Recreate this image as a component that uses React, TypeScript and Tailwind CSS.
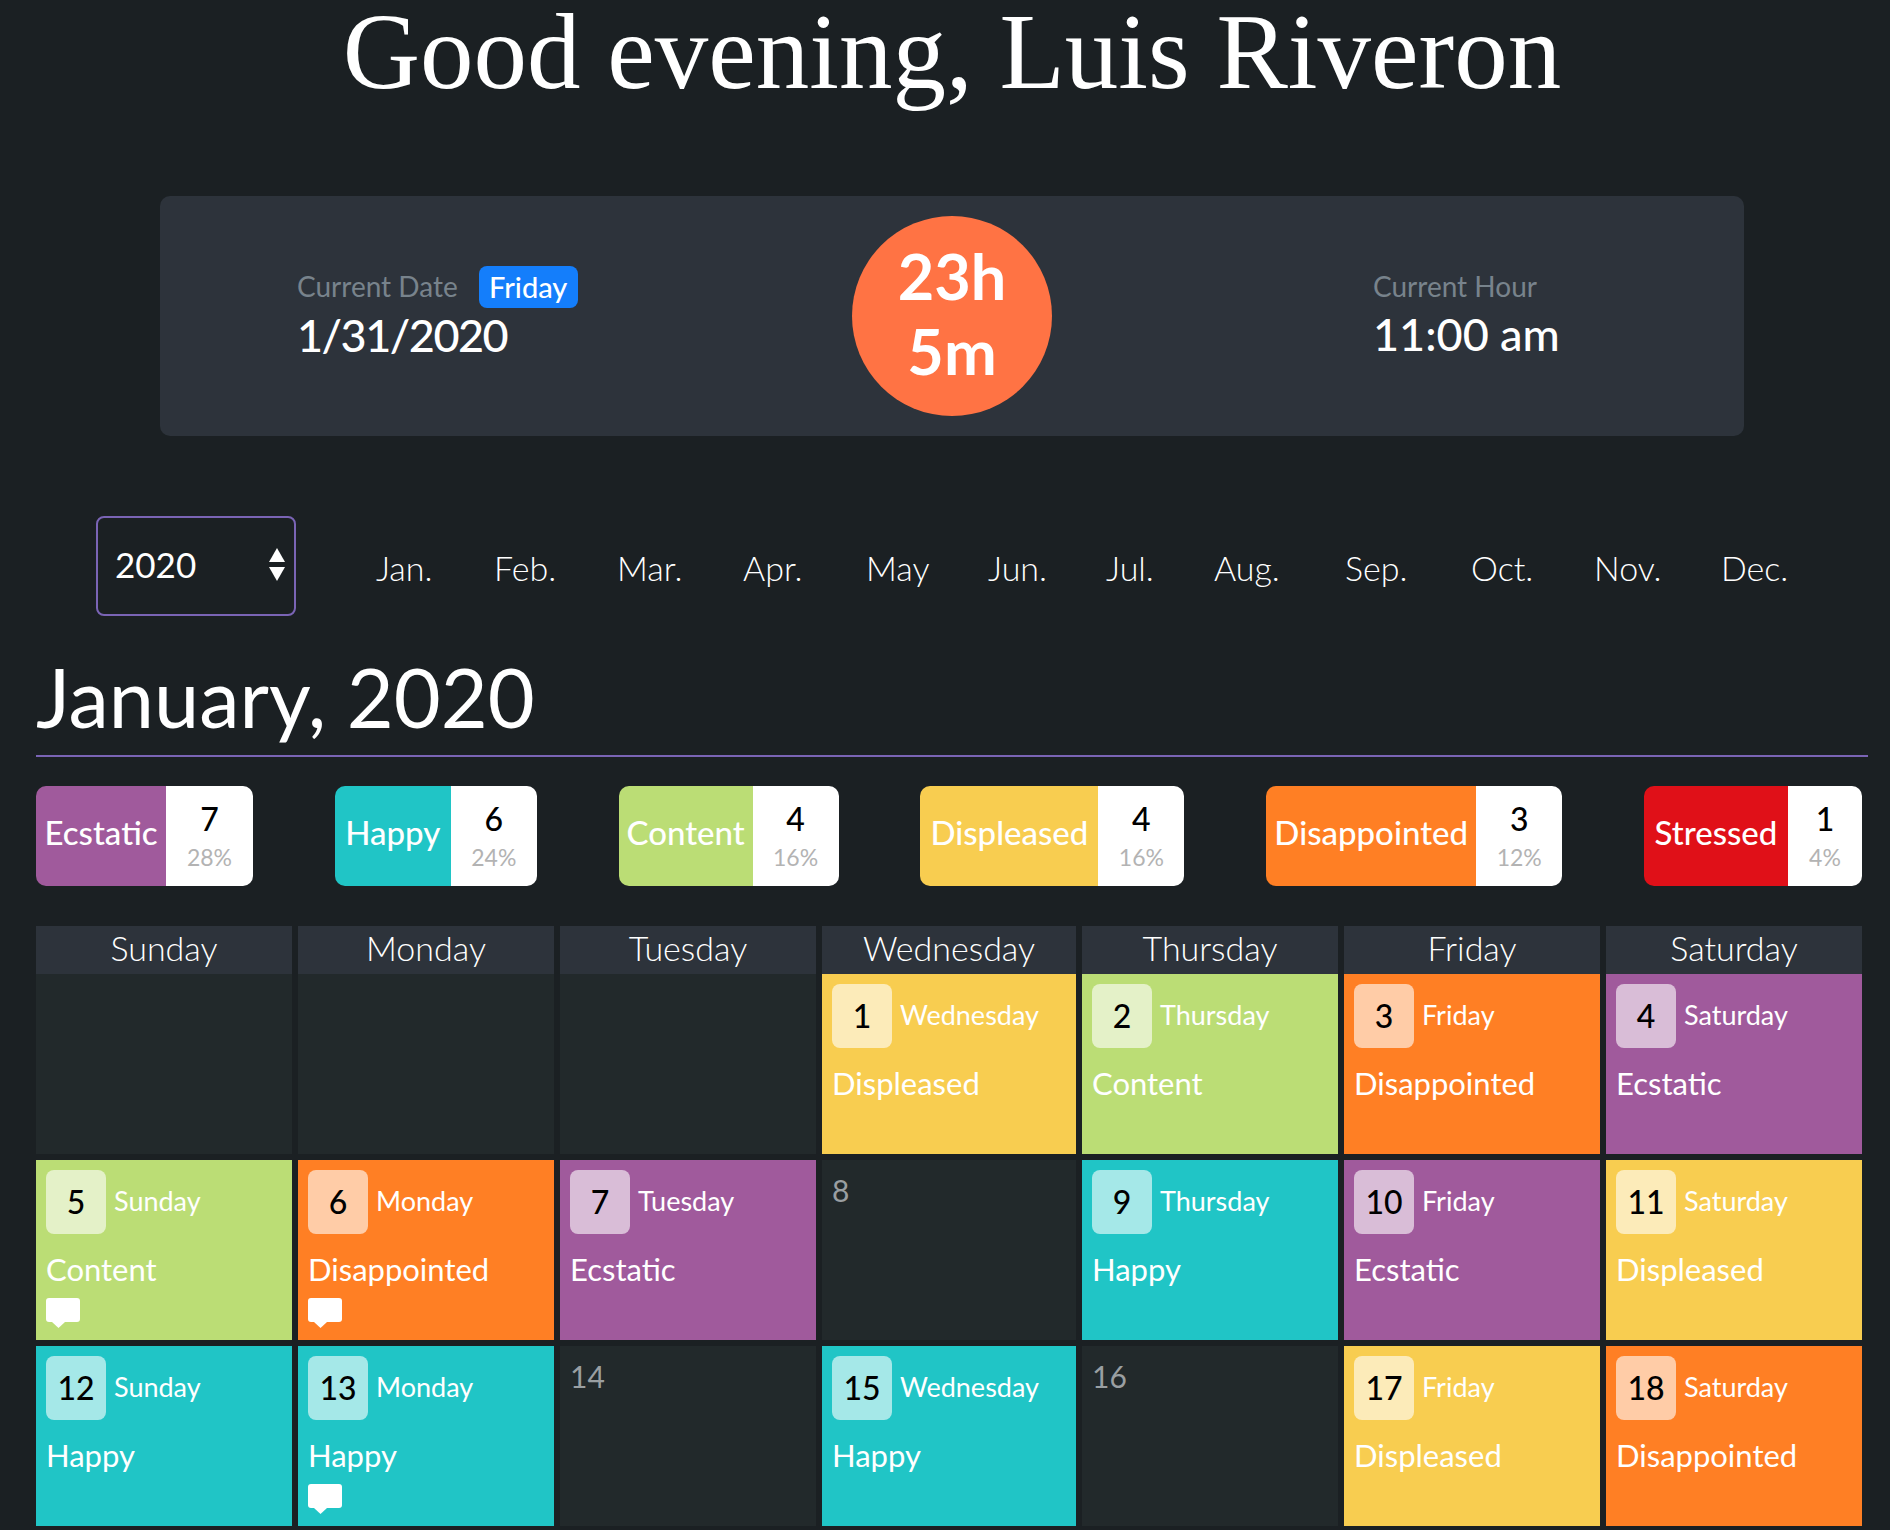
const moods = {
  Ecstatic: 'bg-[#a05a9c]',
  Happy: 'bg-[#20c5c6]',
  Content: 'bg-[#bbdd75]',
  Displeased: 'bg-[#f8cd50]',
  Disappointed: 'bg-[#ff7f24]',
  Stressed: 'bg-[#e01018]',
};

type Mood = keyof typeof moods;

const stats: { mood: Mood; count: number; pct: string; w: string; v: string }[] = [
  { mood: 'Ecstatic', count: 7, pct: '28%', w: 'w-[130px]', v: 'w-[87px]' },
  { mood: 'Happy', count: 6, pct: '24%', w: 'w-[116px]', v: 'w-[86px]' },
  { mood: 'Content', count: 4, pct: '16%', w: 'w-[134px]', v: 'w-[86px]' },
  { mood: 'Displeased', count: 4, pct: '16%', w: 'w-[178px]', v: 'w-[86px]' },
  { mood: 'Disappointed', count: 3, pct: '12%', w: 'w-[210px]', v: 'w-[86px]' },
  { mood: 'Stressed', count: 1, pct: '4%', w: 'w-[144px]', v: 'w-[74px]' },
];

const months = ['Jan.', 'Feb.', 'Mar.', 'Apr.', 'May', 'Jun.', 'Jul.', 'Aug.', 'Sep.', 'Oct.', 'Nov.', 'Dec.'];
const weekdays = ['Sunday', 'Monday', 'Tuesday', 'Wednesday', 'Thursday', 'Friday', 'Saturday'];

type Day = { n?: number; mood?: Mood; note?: boolean };

const days: Day[] = [
  {},
  {},
  {},
  { n: 1, mood: 'Displeased' },
  { n: 2, mood: 'Content' },
  { n: 3, mood: 'Disappointed' },
  { n: 4, mood: 'Ecstatic' },
  { n: 5, mood: 'Content', note: true },
  { n: 6, mood: 'Disappointed', note: true },
  { n: 7, mood: 'Ecstatic' },
  { n: 8 },
  { n: 9, mood: 'Happy' },
  { n: 10, mood: 'Ecstatic' },
  { n: 11, mood: 'Displeased' },
  { n: 12, mood: 'Happy' },
  { n: 13, mood: 'Happy', note: true },
  { n: 14 },
  { n: 15, mood: 'Happy' },
  { n: 16 },
  { n: 17, mood: 'Displeased' },
  { n: 18, mood: 'Disappointed' },
];

function NoteIcon() {
  return (
    <svg width="34" height="30" viewBox="0 0 34 30" className="block" fill="#fff">
      <rect x="0" y="0" width="34" height="24" rx="3" />
      <path d="M6 24 L19 24 L12.5 30 Z" />
    </svg>
  );
}

function DayCell({ day, index }: { day: Day; index: number }) {
  if (!day.mood) {
    return (
      <div className="h-[180px] bg-[#22292b] px-[10px] pt-[10px] text-[30px] leading-[40px] text-[#9a9fa2]">
        {day.n}
      </div>
    );
  }
  return (
    <div className={`h-[180px] px-[10px] pt-[10px] text-white ${moods[day.mood]}`}>
      <div className="flex items-center gap-[8px]">
        <div className="flex h-[64px] w-[60px] items-center justify-center rounded-[8px] bg-white/60 text-[32px] font-medium text-black">
          {day.n}
        </div>
        <span className="-mt-[2px] text-[27px]">{weekdays[index % 7]}</span>
      </div>
      <div className="mt-[13px] text-[31px] leading-[44px]">{day.mood}</div>
      {day.note && (
        <div className="mt-[7px]">
          <NoteIcon />
        </div>
      )}
    </div>
  );
}

export default function App() {
  return (
    <div className="h-[1530px] overflow-hidden bg-[#1b2023] font-['Lato','Liberation_Sans',sans-serif] text-white">
      <h1 className="h-[196px] pl-[14px] text-center font-['Liberation_Serif',serif] text-[107px] leading-[105px]">
        Good evening, Luis Riveron
      </h1>

      <div className="ml-[160px] grid h-[240px] w-[1584px] grid-cols-3 items-center rounded-[10px] bg-[#2d333b]">
        <div className="pb-[2px] pl-[137px]">
          <div className="-mt-[2px] flex items-center gap-[21px]">
            <span className="pb-[2px] text-[28px] text-[#78838c]">Current Date</span>
            <span className="flex h-[42px] w-[99px] items-center justify-center rounded-[8px] bg-[#147efb] text-[29px] font-medium">
              Friday
            </span>
          </div>
          <div className="-mt-[2px] text-[45px] font-medium leading-[56px] tracking-[-1.5px]">1/31/2020</div>
        </div>
        <div className="flex justify-center">
          <div className="flex h-[200px] w-[200px] flex-col items-center justify-center rounded-full bg-[#ff7344] pb-[6px] text-[63px] font-bold leading-[75px]">
            <span>23h</span>
            <span>5m</span>
          </div>
        </div>
        <div className="pb-[4px] pl-[157px]">
          <div className="-mt-[2px] text-[28px] leading-[42px] text-[#78838c]">Current Hour</div>
          <div className="-mt-[1px] text-[45px] font-medium leading-[56px]">11:00 am</div>
        </div>
      </div>

      <div className="mt-[80px] flex items-center pl-[96px]">
        <div className="flex h-[100px] w-[200px] items-center justify-between rounded-[8px] border-2 border-[#7a64b5] pl-[17px] pr-[8px]">
          <span className="-mt-[4px] text-[35px]">2020</span>
          <svg width="18" height="34" viewBox="0 0 18 34" fill="#fff" className="-mt-[2px]">
            <path d="M9 0 L17 14 L1 14 Z" />
            <path d="M9 33 L1 19 L17 19 Z" />
          </svg>
        </div>
        <nav className="ml-[80px] grid grid-cols-[118px_123px_126px_123px_122px_118px_108px_131px_126px_123px_127px_66px] pt-[3px] text-[34px] font-light">
          {months.map((m) => (
            <span key={m}>{m}</span>
          ))}
        </nav>
      </div>

      <h2 className="ml-[36px] mt-[31px] text-[81px] leading-[100px]">January, 2020</h2>
      <div className="mx-[36px] mt-[8px] h-[2px] w-[1832px] bg-[#7a64b5]" />

      <div className="mx-[36px] mt-[29px] flex w-[1826px] justify-between">
        {stats.map((s) => (
          <div key={s.mood} className="flex h-[100px] overflow-hidden rounded-[10px]">
            <div className={`flex items-center justify-center pb-[6px] text-[33px] font-medium ${s.w} ${moods[s.mood]}`}>
              {s.mood}
            </div>
            <div className={`flex flex-col items-center bg-white pt-[11px] ${s.v}`}>
              <span className="text-[32px] font-medium leading-[44px] text-black">{s.count}</span>
              <span className="text-[23px] leading-[32px] text-[#b3b3b3]">{s.pct}</span>
            </div>
          </div>
        ))}
      </div>

      <div className="mx-[36px] mt-[40px] w-[1826px]">
        <div className="grid grid-cols-[256px_256px_256px_254px_256px_256px_256px] gap-x-[6px]">
          {weekdays.map((d) => (
            <div key={d} className="h-[48px] bg-[#2d333b] text-center text-[34px] font-light leading-[43px]">
              {d}
            </div>
          ))}
        </div>
        <div className="grid grid-cols-[256px_256px_256px_254px_256px_256px_256px] gap-[6px]">
          {days.map((day, i) => (
            <DayCell key={i} day={day} index={i} />
          ))}
        </div>
      </div>
    </div>
  );
}
